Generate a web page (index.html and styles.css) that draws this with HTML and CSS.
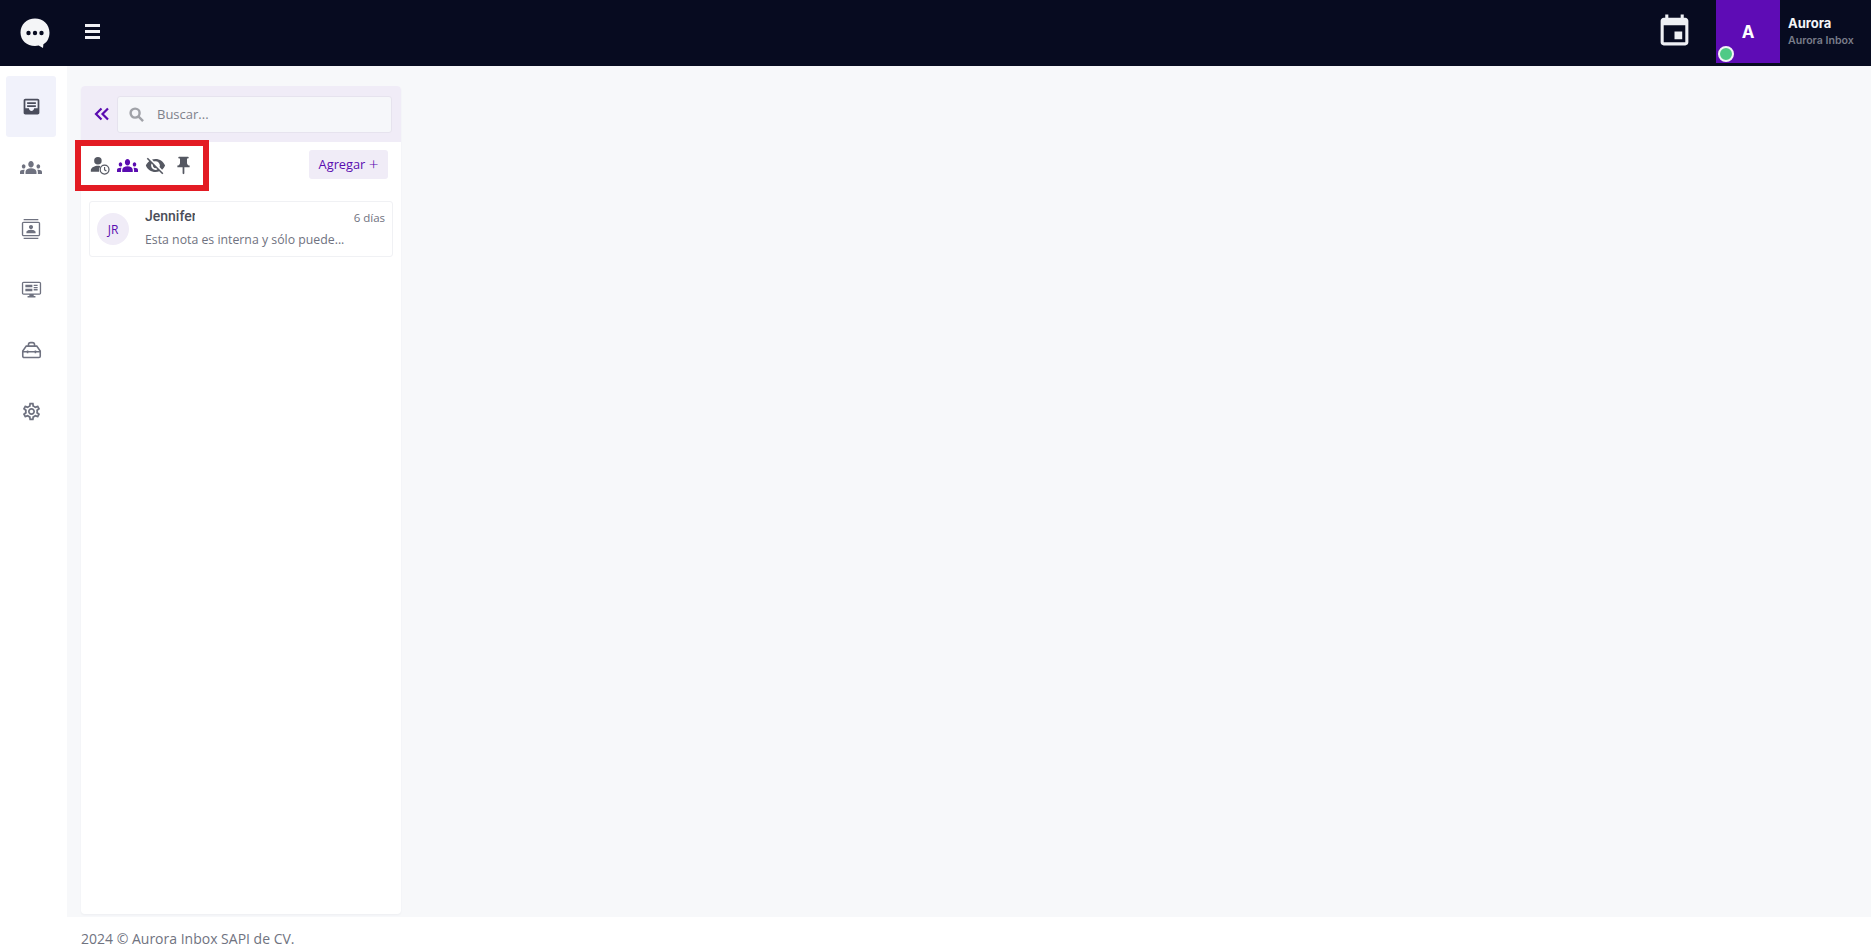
FILE: index.html
```html
<!DOCTYPE html>
<html lang="es">
<head>
  <meta charset="UTF-8" />
  <title>Aurora Inbox</title>
  <link rel="stylesheet" href="styles.css">
</head>
<body>
  <header class="topbar">
    <div class="brand">
      <svg class="logo" viewBox="0 0 30 30" width="30" height="30">
        <path fill="#f4f5f7" d="M15 0.5C6.8 0.5 0.5 6.6 0.5 14.5S6.800 28 15 28c1.300 0 2.500-.2 3.700-.5l4.300 2.500.4-3.800C27.500 24 29.500 19.600 29.500 14.500 29.500 6.600 23.200 0.500 15 0.500z"/>
        <circle cx="8.500" cy="15" r="2.200" fill="#070b20"/>
        <circle cx="15" cy="15" r="2.200" fill="#070b20"/>
        <circle cx="21.500" cy="15" r="2.200" fill="#070b20"/>
      </svg>
    </div>
    <button class="menu-btn">
      <span></span><span></span><span></span>
    </button>
    <div class="topbar-right">
      <svg class="calendar" viewBox="0 0 24 24" width="37" height="37">
        <path fill="#eef0f4" d="M17 12h-5v5h5v-5zM16 1v2H8V1H6v2H5c-1.110 0-1.990.9-1.990 2L3 19c0 1.100.89 2 2 2h14c1.100 0 2-.9 2-2V5c0-1.100-.9-2-2-2h-1V1h-2zm3 18H5V8h14v11z"/>
      </svg>
      <div class="avatar">A<span class="status"></span></div>
      <div class="user">
        <div class="user-name">Aurora</div>
        <div class="user-org">Aurora Inbox</div>
      </div>
    </div>
  </header>

  <div class="main">
    <nav class="sidebar">
      <a class="side-item active">
        <svg viewBox="0 0 24 24" width="21" height="21"><path fill="#4a4d5c" d="M19 3H5c-1.100 0-2 .9-2 2v14c0 1.100.9 2 2 2h14c1.100 0 2-.9 2-2V5c0-1.100-.9-2-2-2zm0 11h-4c0 1.660-1.340 3-3 3s-3-1.340-3-3H5V5h14v9zM7 7h10v2H7zm0 3.500h10v2H7z"/></svg>
      </a>
      <a class="side-item">
        <svg viewBox="0 6 24 12" width="22" height="13" preserveAspectRatio="none"><path fill="#6f7280" d="M12 12.750c1.630 0 3.070.39 4.240.9 1.080.48 1.760 1.560 1.760 2.730V18H6v-1.610c0-1.180.68-2.260 1.760-2.730 1.170-.52 2.610-.91 4.240-.91zM4 13c1.100 0 2-.9 2-2s-.9-2-2-2-2 .9-2 2 .9 2 2 2zm1.130 1.100C4.760 14.040 4.390 14 4 14c-.99 0-1.930.21-2.780.58C.48 14.900 0 15.620 0 16.430V18h4.500v-1.610c0-.83.23-1.610.63-2.290zM20 13c1.100 0 2-.9 2-2s-.9-2-2-2-2 .9-2 2 .9 2 2 2zm4 3.430c0-.81-.48-1.530-1.220-1.850-.85-.37-1.790-.58-2.780-.58-.39 0-.76.04-1.130.1.4.68.63 1.460.63 2.290V18H24v-1.570zM12 6c1.660 0 3 1.340 3 3s-1.340 3-3 3-3-1.340-3-3 1.340-3 3-3z"/></svg>
      </a>
      <a class="side-item">
        <svg viewBox="0 0 24 24" width="22" height="22"><path fill="#6f7280" d="M4 1h16v1.500H4zM4 21.500h16V23H4zM20 4H4c-1.100 0-2 .9-2 2v12c0 1.100.9 2 2 2h16c1.100 0 2-.9 2-2V6c0-1.100-.9-2-2-2zm.5 14.500h-17v-13h17v13zM12 7.500c1.240 0 2.250 1.010 2.250 2.250S13.240 12 12 12s-2.250-1.010-2.250-2.250S10.760 7.500 12 7.500zM7 16.500v-1.200c0-1.670 3.330-2.500 5-2.500s5 .83 5 2.500v1.200H7z"/></svg>
      </a>
      <a class="side-item">
        <svg viewBox="0 0 24 24" width="21" height="21"><path fill="#6f7280" d="M21 3H3c-1.100 0-2 .9-2 2v11c0 1.100.9 2 2 2h6.500v1.500H7.500V21h9v-1.500h-2V18H21c1.100 0 2-.9 2-2V5c0-1.100-.9-2-2-2zm.5 13.500h-19v-12h19v12zM5 6.500h8v3H5zm0 4.500h8v3H5zm9.500-4.500H19V8h-4.500zm0 2.500H19v1.500h-4.500zm0 2.500H19V13h-4.500z"/></svg>
      </a>
      <a class="side-item">
        <svg viewBox="0 0 24 24" width="21" height="21" fill="none" stroke="#6f7280" stroke-width="1.800"><path d="M8.500 8V5.500C8.500 4.100 9.600 3 11 3h2c1.400 0 2.500 1.100 2.500 2.500V8"/><path d="M6 7h12l4 5.500V18.500c0 .8-.7 1.500-1.500 1.500h-17C2.700 20 2 19.300 2 18.500V12.500z"/><path d="M2 13.500h20M7.500 12v3M16.500 12v3"/></svg>
      </a>
      <a class="side-item">
        <svg viewBox="0 0 24 24" width="21" height="21"><path fill="#6f7280" d="M19.430 12.980c.04-.32.07-.64.07-.98s-.03-.66-.07-.98l2.110-1.650c.19-.15.24-.42.12-.64l-2-3.460c-.12-.22-.39-.3-.61-.22l-2.490 1c-.52-.4-1.080-.73-1.690-.98l-.38-2.650C14.460 2.180 14.250 2 14 2h-4c-.25 0-.46.18-.49.42l-.38 2.650c-.61.25-1.170.59-1.690.98l-2.490-1c-.23-.09-.49 0-.61.22l-2 3.460c-.13.22-.07.49.12.64l2.110 1.650c-.04.32-.07.65-.07.98s.03.66.07.98l-2.110 1.650c-.19.15-.24.42-.12.64l2 3.460c.12.22.39.3.61.22l2.490-1c.52.4 1.080.73 1.690.98l.38 2.650c.03.24.24.42.49.42h4c.25 0 .46-.18.49-.42l.38-2.650c.61-.25 1.170-.59 1.690-.98l2.490 1c.23.09.49 0 .61-.22l2-3.460c.12-.22.07-.49-.12-.64l-2.110-1.650zM17.450 11.270c.04.31.05.52.05.73s-.02.43-.05.73l-.14 1.130.89.7 1.080.84-.7 1.210-1.270-.51-1.040-.42-.9.68c-.43.32-.84.56-1.250.73l-1.060.43-.16 1.130-.2 1.350h-1.400l-.19-1.350-.16-1.130-1.060-.43c-.43-.18-.83-.41-1.230-.71l-.91-.7-1.060.43-1.270.51-.7-1.210 1.080-.84.89-.7-.14-1.130c-.03-.31-.05-.54-.05-.74s.02-.43.05-.73l.14-1.130-.89-.7-1.080-.84.7-1.210 1.270.51 1.040.42.9-.68c.43-.32.84-.56 1.250-.73l1.060-.43.16-1.130.2-1.350h1.390l.19 1.350.16 1.130 1.060.43c.43.18.83.41 1.230.71l.91.7 1.060-.43 1.270-.51.7 1.210-1.070.85-.89.7.14 1.130zM12 8c-2.210 0-4 1.790-4 4s1.790 4 4 4 4-1.790 4-4-1.790-4-4-4zm0 6c-1.100 0-2-.9-2-2s.9-2 2-2 2 .9 2 2-.9 2-2 2z"/></svg>
      </a>
    </nav>

    <div class="content">
      <section class="panel">
        <div class="panel-head">
          <span class="collapse">
            <svg viewBox="0 0 16 16" width="16" height="16" fill="none" stroke="#5a0cb0" stroke-width="2.200"><path d="M7.500 2.500 2 8l5.500 5.500M14 2.500 8.500 8l5.500 5.500"/></svg>
          </span>
          <div class="search">
            <svg viewBox="0 0 16 16" width="15" height="15" fill="none" stroke="#a0a2a8" stroke-width="2.600"><circle cx="6.500" cy="6.500" r="4.800"/><path d="m10 10 5 5"/></svg>
            <span class="search-text">Buscar...</span>
          </div>
        </div>

        <div class="tools">
          <div class="filters">
            <svg viewBox="0 0 24 24" width="20" height="20"><circle cx="9.500" cy="7" r="4.500" fill="#555862"/><path fill="#555862" d="M1 20v-1.500C1 15 6 13 9.500 13c1 0 2 .15 3 .45A7 7 0 0 0 11 20z"/><circle cx="17.500" cy="17.500" r="5.300" fill="none" stroke="#555862" stroke-width="1.500"/><path d="M17.500 14.500v3.300l2.200 1.300" fill="none" stroke="#555862" stroke-width="1.300"/></svg>
            <svg viewBox="0 6 24 12" width="21" height="13" preserveAspectRatio="none"><path fill="#5a0cb0" d="M12 12.750c1.630 0 3.070.39 4.240.9 1.080.48 1.760 1.560 1.760 2.730V18H6v-1.610c0-1.180.68-2.260 1.760-2.730 1.170-.52 2.610-.91 4.240-.91zM4 13c1.100 0 2-.9 2-2s-.9-2-2-2-2 .9-2 2 .9 2 2 2zm1.130 1.100C4.760 14.040 4.390 14 4 14c-.99 0-1.930.21-2.780.58C.48 14.900 0 15.620 0 16.430V18h4.500v-1.610c0-.83.23-1.610.63-2.290zM20 13c1.100 0 2-.9 2-2s-.9-2-2-2-2 .9-2 2 .9 2 2 2zm4 3.430c0-.81-.48-1.530-1.220-1.850-.85-.37-1.790-.58-2.780-.58-.39 0-.76.04-1.130.1.4.68.63 1.460.63 2.290V18H24v-1.570zM12 6c1.660 0 3 1.340 3 3s-1.340 3-3 3-3-1.340-3-3 1.340-3 3-3z"/></svg>
            <svg viewBox="0 0 24 24" width="21" height="21"><path fill="#555862" d="M12 7c2.760 0 5 2.240 5 5 0 .65-.13 1.260-.36 1.830l2.920 2.920c1.510-1.260 2.700-2.890 3.430-4.750-1.730-4.390-6-7.500-11-7.500-1.400 0-2.740.25-3.980.7l2.160 2.160C10.740 7.130 11.350 7 12 7zM2 4.270l2.280 2.280.46.46C3.080 8.300 1.780 10.020 1 12c1.730 4.390 6 7.500 11 7.500 1.550 0 3.030-.3 4.380-.84l.42.42L19.730 22 21 20.730 3.270 3 2 4.270zM7.530 9.800l1.550 1.550c-.05.21-.08.43-.08.65 0 1.660 1.340 3 3 3 .22 0 .44-.03.65-.08l1.550 1.550c-.67.33-1.410.53-2.200.53-2.760 0-5-2.240-5-5 0-.79.2-1.530.53-2.200z"/></svg>
            <svg viewBox="0 0 24 24" width="21" height="21"><path fill="#555862" d="M16 9V4h1c.55 0 1-.45 1-1s-.45-1-1-1H7c-.55 0-1 .45-1 1s.45 1 1 1h1v5c0 1.660-1.340 3-3 3v2h5.970v7l1 1 1-1v-7H19v-2c-1.660 0-3-1.340-3-3z"/></svg>
          </div>
          <button class="add-btn">Agregar <span class="plus">+</span></button>
        </div>

        <article class="chat">
          <div class="chat-avatar">JR</div>
          <div class="chat-body">
            <div class="chat-top">
              <span class="chat-name">Jennifer</span>
              <span class="chat-time">6 días</span>
            </div>
            <div class="chat-msg">Esta nota es interna y sólo puede...</div>
          </div>
        </article>
      </section>
    </div>
  </div>

  <footer class="footer">2024 © Aurora Inbox SAPI de CV.</footer>
</body>
</html>
```

FILE: styles.css
```css
* {
  box-sizing: border-box;
}

html, body {
  height: 100%;
}

body {
  margin: 0;
  font-family: "Open Sans", "Noto Sans", sans-serif;
  background: #fff;
  display: flex;
  flex-direction: column;
  overflow: hidden;
}

.topbar {
  height: 66px;
  background: #070b20;
  display: flex;
  align-items: center;
  flex: none;
}

.brand {
  width: 70px;
  padding-left: 20px;
  display: flex;
  align-items: center;
}

.menu-btn {
  background: none;
  border: none;
  padding: 0;
  width: 15px;
  margin-left: 15px;
  display: flex;
  flex-direction: column;
  gap: 3px;
  margin-top: -3px;
}

.menu-btn span {
  display: block;
  height: 3px;
  background: #f0f1f4;
}

.topbar-right {
  margin-left: auto;
  display: flex;
  align-items: center;
  height: 100%;
}

.calendar {
  margin-right: 23px;
  margin-top: -3px;
}

.avatar {
  position: relative;
  width: 64px;
  height: 63px;
  align-self: flex-start;
  background: #5e0cb5;
  color: #fff;
  font-family: "Inter", sans-serif;
  font-weight: 700;
  font-size: 17px;
  display: flex;
  align-items: center;
  justify-content: center;
}

.status {
  position: absolute;
  left: 2px;
  bottom: 1px;
  width: 16px;
  height: 16px;
  border-radius: 50%;
  background: #4fca86;
  border: 2px solid #f2f4f6;
}

.user {
  width: 91px;
  padding-left: 8px;
  margin-top: -3px;
}

.user-name {
  font-family: "Inter", sans-serif;
  font-weight: 700;
  font-size: 13px;
  line-height: 18px;
  color: #f4f5f7;
}

.user-org {
  font-family: "Inter", sans-serif;
  font-weight: 600;
  font-size: 10.600px;
  line-height: 18px;
  color: #797d8a;
  white-space: nowrap;
}

.main {
  flex: 1;
  display: flex;
  min-height: 0;
}

.sidebar {
  width: 67px;
  flex: none;
  background: #fff;
  padding: 10px 6px 0;
}

.side-item {
  height: 61px;
  width: 50px;
  display: flex;
  align-items: center;
  justify-content: center;
  border-radius: 3px;
}

.side-item.active {
  background: #f1f2fb;
}

.content {
  flex: 1;
  background: #f7f8fa;
  padding: 20px 14px 3px;
}

.panel {
  width: 320px;
  height: 100%;
  background: #fff;
  border-radius: 4px;
  box-shadow: 0 1px 2px rgba(60, 60, 90, .05);
}

.panel-head {
  height: 56px;
  background: #f0ecf7;
  border-radius: 4px 4px 0 0;
  display: flex;
  align-items: center;
  padding: 0 9px 0 13px;
}

.collapse {
  width: 23px;
  display: flex;
}

.search {
  flex: 1;
  height: 37px;
  background: #f6f7fa;
  border-radius: 3px;
  border: 1px solid #e6e3ee;
  display: flex;
  align-items: center;
  padding-left: 11px;
  gap: 13px;
}

.search-text {
  font-size: 13px;
  color: #7e818b;
}

.tools {
  display: flex;
  align-items: center;
  justify-content: space-between;
  padding: 0 13px 0 8px;
  height: 46px;
}

.filters {
  display: flex;
  align-items: center;
  gap: 7px;
  width: 134px;
  height: 51px;
  flex: none;
  margin-left: -14px;
  padding-left: 9px;
  border: 6px solid #e31b23;
}

.add-btn {
  height: 29px;
  width: 79px;
  border: none;
  padding: 0;
  margin-top: -2px;
  background: #f0ecf7;
  border-radius: 3px;
  color: #5a0cb0;
  font-family: "Open Sans", sans-serif;
  font-size: 12.800px;
}

.plus {
  font-size: 17px;
  font-weight: 300;
  line-height: 1;
  vertical-align: -1px;
}

.chat {
  margin: 13px 8px 0;
  height: 56px;
  border: 1px solid #f0f1f4;
  border-radius: 3px;
  display: flex;
  align-items: center;
  padding: 0 6px 0 7px;
}

.chat-avatar {
  width: 32px;
  height: 32px;
  border-radius: 50%;
  background: #f0ecf7;
  color: #5a0cb0;
  font-size: 12px;
  display: flex;
  align-items: center;
  justify-content: center;
  flex: none;
}

.chat-body {
  flex: 1;
  margin-left: 16px;
}

.chat-top {
  display: flex;
  justify-content: space-between;
  align-items: center;
  height: 20px;
  margin-top: -2px;
}

.chat-name {
  width: 50px;
  overflow: hidden;
  white-space: nowrap;
  font-family: "Roboto", sans-serif;
  font-weight: 500;
  font-size: 14px;
  color: #4b4e59;
  margin-top: -3px;
}

.chat-time {
  font-size: 11.500px;
  color: #6f7280;
  margin-right: 1px;
}

.chat-msg {
  margin-top: 4px;
  font-size: 12.300px;
  line-height: 18px;
  color: #6f7280;
  white-space: nowrap;
}

.footer {
  flex: none;
  height: 35px;
  padding: 13px 0 0 81px;
  background: #fff;
  font-size: 14px;
  line-height: 18px;
  color: #70737f;
}
```
